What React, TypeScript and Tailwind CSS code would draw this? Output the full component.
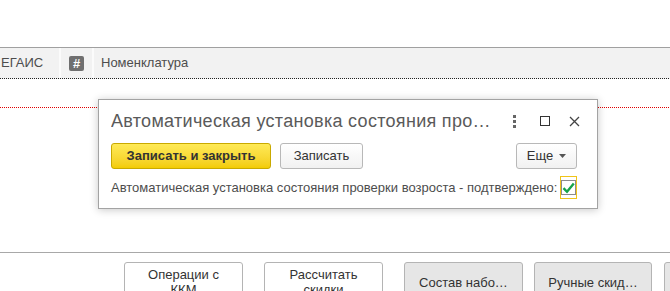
import React from 'react';

const font = { fontFamily: '"Liberation Sans", Arial, sans-serif' };

const BottomButton: React.FC<{ label: string; gray?: boolean; width?: string }> = ({ label, gray, width = 'w-[119px]' }) => (
  <div
    className={`${width} h-[40px] shrink-0 rounded-[3px] border border-[#b4b4b4] text-[13px] leading-[15px] text-[#333] text-center flex items-center justify-center px-2 ${
      gray ? 'bg-[#e6e6e6]' : 'bg-white'
    }`}
  >
    <span className="whitespace-pre-line">{label}</span>
  </div>
);

const App: React.FC = () => {
  return (
    <div className="relative w-[670px] h-[291px] overflow-hidden bg-white" style={font}>
      {/* top blank area */}
      <div className="h-[47px]" />

      {/* table header */}
      <div className="h-[1px] bg-[#a0a0a0]" />
      <div className="h-[30px] bg-[#f2f2f2] flex text-[13px] text-[#4d4d4d]">
        <div className="w-[61px] border-r-2 border-r-[#fbfbfb] flex items-center pl-[1px]">ЕГАИС</div>
        <div className="w-[33px] border-r-2 border-r-[#fbfbfb] flex items-center justify-center">
          <div className="w-[15px] h-[15px] rounded-[2px] bg-[#6f6f6f] text-white text-[13px] font-bold leading-[15px] text-center">#</div>
        </div>
        <div className="flex items-center pl-[7px]">Номенклатура</div>
      </div>
      <div className="h-[1px] bg-[repeating-linear-gradient(90deg,#222_0_1px,#f2f2f2_1px_2px)]" />

      {/* table body */}
      <div className="h-[174px] border-b border-[#a8a8a8] pt-[28px]">
        <div className="h-[1px] bg-[repeating-linear-gradient(90deg,#e00000_0_1px,#ffffff_1px_2px)]" />
      </div>

      {/* bottom command bar */}
      <div className="flex pt-[9px]">
        <div className="w-[124px] shrink-0" />
        <BottomButton label={'Операции с\nККМ'} />
        <div className="w-[21px] shrink-0" />
        <BottomButton label={'Рассчитать\nскидки'} />
        <div className="w-[21px] shrink-0" />
        <BottomButton label="Состав набо…" gray />
        <div className="w-[11px] shrink-0" />
        <BottomButton label="Ручные скид…" gray width="w-[118px]" />
        <div className="w-[12px] shrink-0" />
        <BottomButton label="" gray />
      </div>

      {/* floating dialog */}
      <div className="absolute left-[98px] top-[99px] w-[500px] h-[110px] bg-white border border-[#a3a3a3] shadow-[0_1px_8px_rgba(0,0,0,0.22)] pl-[12px] pr-[20px]">
        <div className="flex items-center h-[42px]">
          <div className="flex-1 text-[18px] text-[#5a5a5a] whitespace-nowrap overflow-hidden tracking-[0.3px]">
            Автоматическая установка состояния про…
          </div>
          <div className="w-[6px] flex flex-col items-center gap-[2px] mr-[23px] ml-[14px]">
            <span className="w-[3px] h-[3px] bg-[#666]" />
            <span className="w-[3px] h-[3px] bg-[#666]" />
            <span className="w-[3px] h-[3px] bg-[#666]" />
          </div>
          <div className="w-[10px] h-[10px] border-[1.5px] border-[#333] mr-[19px]" />
          <svg width="11" height="11" viewBox="0 0 11 11" className="mr-[-3px]">
            <path d="M1 1 L10 10 M10 1 L1 10" stroke="#444" strokeWidth="1.3" />
          </svg>
        </div>

        <div className="flex items-center h-[26px] mt-[1px]">
          <div className="w-[160px] h-[26px] rounded-[3px] border border-[#c9a900] bg-gradient-to-b from-[#ffea55] to-[#f3cc00] text-[13px] font-bold text-[#333] flex items-center justify-center">
            Записать и закрыть
          </div>
          <div className="ml-[9px] w-[83px] h-[26px] rounded-[3px] border border-[#b8b8b8] bg-gradient-to-b from-white to-[#f1f1f1] text-[13px] text-[#333] flex items-center justify-center">
            Записать
          </div>
          <div className="flex-1" />
          <div className="w-[61px] h-[26px] rounded-[3px] border border-[#b8b8b8] bg-gradient-to-b from-white to-[#f1f1f1] text-[13px] text-[#333] flex items-center justify-center gap-[6px]">
            Еще
            <svg width="7" height="4" viewBox="0 0 7 4">
              <path d="M0 0 L7 0 L3.5 4 Z" fill="#555" />
            </svg>
          </div>
        </div>

        <div className="flex items-center h-[23px] mt-[7px]">
          <span className="text-[13px] text-[#4d4d4d] whitespace-nowrap">
            Автоматическая установка состояния проверки возроста - подтверждено:
          </span>
          <div className="ml-[3px] w-[23px] h-[23px] border border-[#f0c419] flex items-center justify-center">
            <div className="w-[15px] h-[15px] border border-[#8c8c8c] bg-white flex items-center justify-center">
              <svg width="13" height="12" viewBox="0 0 13 12">
                <path d="M1.5 6.2 L5 9.8 L11.8 1.5" fill="none" stroke="#16a34a" strokeWidth="2.4" />
              </svg>
            </div>
          </div>
        </div>
      </div>
    </div>
  );
};

export default App;
